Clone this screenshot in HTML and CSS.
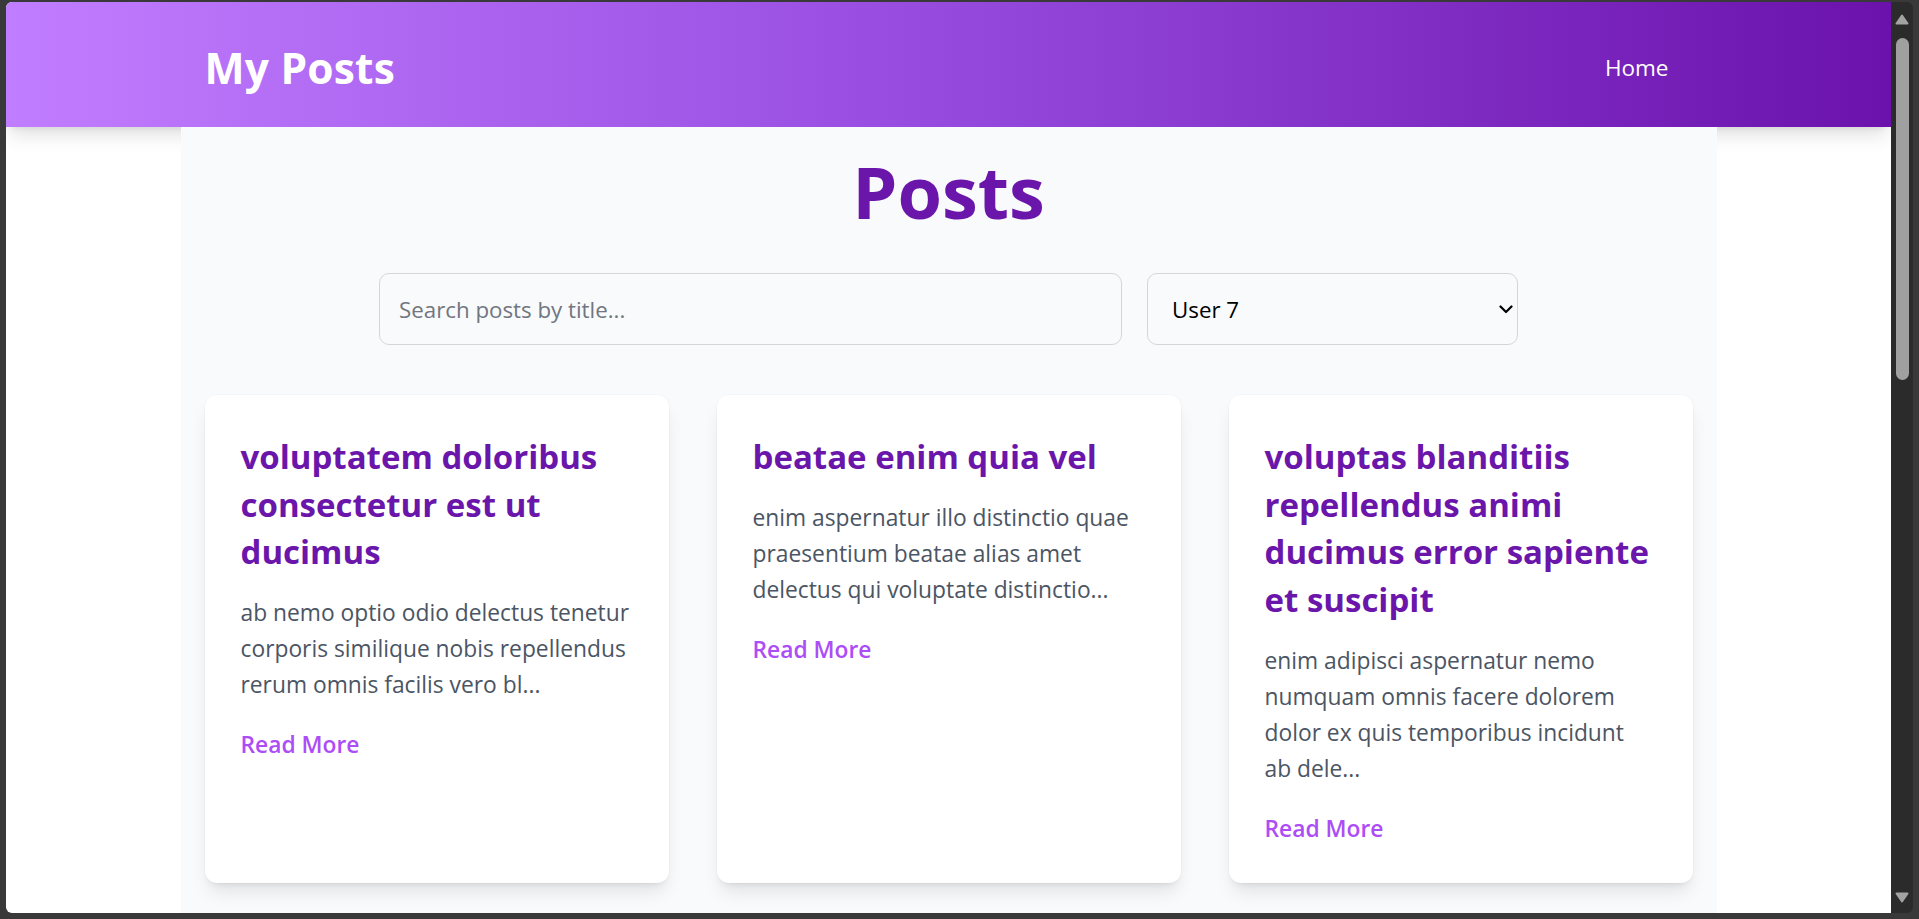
FILE: index.html
```html
<!DOCTYPE html>
<html lang="en">
<head>
<meta charset="utf-8">
<title>My Posts</title>
<link rel="stylesheet" href="styles.css">
</head>
<body>
<div class="window">
  <div class="viewport">
    <header class="site-header">
      <div class="header-inner">
        <h1 class="logo">My Posts</h1>
        <nav class="nav"><a class="nav-link" href="#">Home</a></nav>
      </div>
    </header>
    <main class="container">
      <h2 class="page-title">Posts</h2>
      <div class="filters">
        <input class="search" type="text" placeholder="Search posts by title...">
        <div class="select-wrap">
          <select class="user-select">
            <option>User 7</option>
          </select>
          <svg class="chevron" width="14" height="9" viewBox="0 0 14 9"><path d="M1.5 1.5 L7 7 L12.5 1.5" fill="none" stroke="#000" stroke-width="2.2" stroke-linecap="round" stroke-linejoin="round"/></svg>
        </div>
      </div>
      <div class="grid">
        <article class="card">
          <h3 class="card-title">voluptatem doloribus consectetur est ut ducimus</h3>
          <p class="card-body">ab nemo optio odio delectus tenetur corporis similique nobis repellendus rerum omnis facilis vero bl...</p>
          <a class="read-more" href="#">Read More</a>
        </article>
        <article class="card">
          <h3 class="card-title">beatae enim quia vel</h3>
          <p class="card-body">enim aspernatur illo distinctio quae praesentium beatae alias amet delectus qui voluptate distinctio...</p>
          <a class="read-more" href="#">Read More</a>
        </article>
        <article class="card">
          <h3 class="card-title">voluptas blanditiis repellendus animi ducimus error sapiente et suscipit</h3>
          <p class="card-body">enim adipisci aspernatur nemo numquam omnis facere dolorem dolor ex quis temporibus incidunt ab dele...</p>
          <a class="read-more" href="#">Read More</a>
        </article>
      </div>
    </main>
  </div>
  <div class="scrollbar">
    <svg class="arrow" width="14" height="11" viewBox="0 0 14 11"><polygon points="7,1.5 12.5,9.5 1.5,9.5" fill="#a3a3a3" stroke="#a3a3a3" stroke-width="2" stroke-linejoin="round"/></svg>
    <div class="thumb"></div>
    <div class="track-space"></div>
    <svg class="arrow" width="14" height="11" viewBox="0 0 14 11"><polygon points="1.5,1.5 12.5,1.5 7,9.5" fill="#a3a3a3" stroke="#a3a3a3" stroke-width="2" stroke-linejoin="round"/></svg>
  </div>
</div>
</body>
</html>
```

FILE: styles.css
```css
* { box-sizing: border-box; }

html, body {
  margin: 0;
  padding: 0;
}

body {
  width: 1919px;
  height: 919px;
  overflow: hidden;
  background: #393939;
  font-family: "Open Sans", "Noto Sans", sans-serif;
}

.window {
  display: flex;
  padding: 2px 6px 6px 6px;
  height: 919px;
}

.viewport {
  width: 1885px;
  height: 911px;
  overflow: hidden;
  background: #ffffff;
  border-radius: 6px 0 0 6px;
}

.scrollbar {
  width: 22px;
  height: 911px;
  background: #2b2b2b;
  border-radius: 0 6px 6px 0;
  display: flex;
  flex-direction: column;
  align-items: center;
  padding: 12px 0 10px;
}

.arrow { display: block; flex: none; }

.thumb {
  margin-top: 13px;
  width: 13px;
  height: 342px;
  border-radius: 7px;
  background: #a0a0a0;
  flex: none;
}

.track-space { flex: 1; }

/* Header */
.site-header {
  height: 125px;
  padding-top: 6px;
  background: linear-gradient(to right, #c17dff 0%, #9a4fe2 45%, #6b12ac 100%);
  box-shadow: 0 12px 18px -4px rgba(0, 0, 0, 0.12), 0 5px 7px -5px rgba(0, 0, 0, 0.1);
}

.header-inner {
  width: 1536px;
  height: 100%;
  margin: 0 auto;
  padding: 0 24px;
  display: flex;
  align-items: center;
  justify-content: space-between;
}

.logo {
  margin: 0;
  font-size: 42.5px;
  line-height: 48px;
  font-weight: 700;
  color: #ffffff;
  letter-spacing: 0.2px;
}

.nav-link {
  display: block;
  padding: 8px 24px;
  font-size: 22.5px;
  line-height: 30px;
  color: #ffffff;
  text-decoration: none;
}

/* Main */
.container {
  width: 1536px;
  min-height: 900px;
  margin: 0 auto;
  padding: 28px 24px 40px;
  background: #f9fafb;
}

.page-title {
  margin: 0 0 46px;
  text-align: center;
  font-size: 72px;
  line-height: 72px;
  font-weight: 700;
  color: #6b16aa;
}

.filters {
  width: 1139px;
  margin: 0 auto 50px;
  display: flex;
  gap: 25px;
}

.search {
  flex: none;
  width: 743px;
  height: 72px;
  padding: 0 19px;
  border: 1px solid #d4d6dc;
  border-radius: 10px;
  background: #f9fafb;
  font-family: inherit;
  font-size: 22.3px;
  color: #111827;
  outline: none;
}

.search::placeholder { color: #717680; }

.select-wrap {
  position: relative;
  flex: none;
  width: 371px;
  height: 72px;
}

.user-select {
  width: 100%;
  height: 100%;
  padding: 0 24px;
  border: 1px solid #d4d6dc;
  border-radius: 10px;
  background: #f9fafb;
  font-family: inherit;
  font-size: 22.3px;
  color: #000000;
  appearance: none;
  -webkit-appearance: none;
  outline: none;
}

.chevron {
  position: absolute;
  right: 5px;
  top: 32px;
  pointer-events: none;
}

.grid {
  display: grid;
  grid-template-columns: repeat(3, 1fr);
  gap: 48px;
}

.card {
  background: #ffffff;
  border-radius: 12px;
  padding: 38px 37px 36px 36px;
  box-shadow: 0 12px 18px -4px rgba(0, 0, 0, 0.1), 0 5px 7px -5px rgba(0, 0, 0, 0.1), 0 0 0 1px rgba(0, 0, 0, 0.02);
}

.card-title {
  margin: 0 0 19.5px;
  font-size: 33px;
  line-height: 47.5px;
  font-weight: 700;
  color: #6b16aa;
}

.card-body {
  margin: 0 0 24px;
  font-size: 22.8px;
  line-height: 36px;
  color: #4b5563;
}

.read-more {
  display: inline-block;
  font-size: 22.8px;
  line-height: 36px;
  font-weight: 600;
  color: #ac4df6;
  text-decoration: none;
}
```
